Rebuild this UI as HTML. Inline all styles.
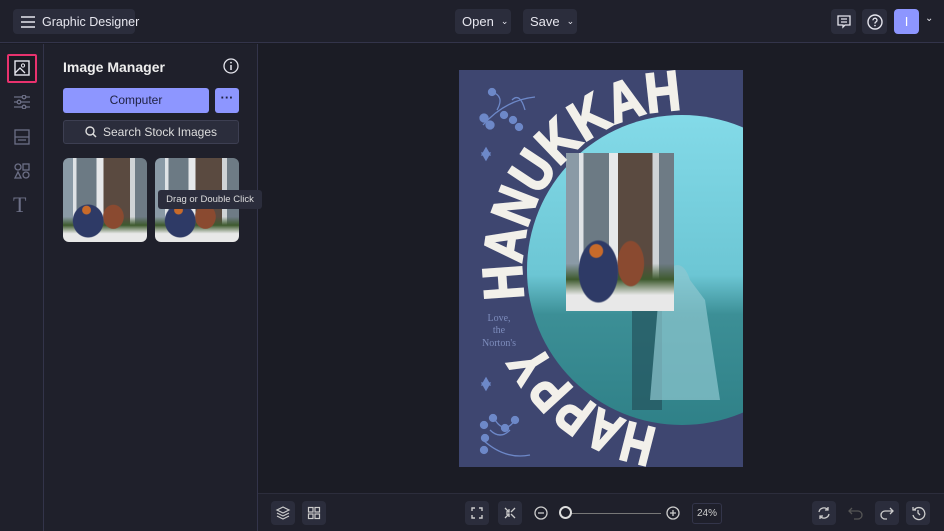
<!DOCTYPE html>
<html><head><style>
*{box-sizing:border-box;margin:0;padding:0}
body{width:944px;height:531px;background:#1b1c25;font-family:"Liberation Sans",sans-serif;color:#e6e6ee;position:relative;overflow:hidden}
.top{position:absolute;left:0;top:0;width:944px;height:43px;background:#1f202b;border-bottom:1px solid #33344a}
.btn{position:absolute;background:#2b2d3c;border-radius:4px;font-size:13px;color:#e6e6ee;display:flex;align-items:center;white-space:nowrap}
.btn svg{flex-shrink:0}
.rail{position:absolute;left:0;top:44px;width:44px;height:487px;background:#1f202b;border-right:1px solid #33344a}
.panel{position:absolute;left:44px;top:44px;width:214px;height:487px;background:#1f202b;border-right:1px solid #33344a}
.bottom{position:absolute;left:258px;top:493px;width:686px;height:38px;background:#1f202b;border-top:1px solid #2c2d3c}
.ib{position:absolute;width:24px;height:24px;background:#2b2d3c;border-radius:4px}
.photo{position:absolute;border-radius:6px;overflow:hidden;background:
radial-gradient(circle at 28% 62%,#c86a2a 0 5%,transparent 6%),
radial-gradient(ellipse at 30% 75%,#2e3a66 0 18%,transparent 19%),
radial-gradient(ellipse at 60% 70%,#8a4a30 0 14%,transparent 15%),
linear-gradient(180deg,transparent 70%,#3e5a2e 80%,#e8e8e8 90%),
linear-gradient(90deg,#8a9aa6 0 12%,#dfe3e6 12% 16%,#6c7a84 16% 40%,#e6e8ea 40% 48%,#5a4a40 48% 80%,#cfd3d6 80% 86%,#6e7b85 86%)}
</style></head><body>
<div class="top">
  <div class="btn" style="left:13px;top:9px;width:122px;height:25px;padding-left:8px">
    <svg width="14" height="12"><path d="M0 1H14M0 6H14M0 11H14" stroke="#e6e6ee" stroke-width="1.5"/></svg>
    <span style="margin-left:7px;font-size:12.5px">Graphic Designer</span></div>
  <div class="btn" style="left:455px;top:9px;width:56px;height:25px;padding-left:7px">Open <span style="font-size:9px;margin-left:7px">&#8964;</span></div>
  <div class="btn" style="left:523px;top:9px;width:54px;height:25px;padding-left:7px">Save <span style="font-size:9px;margin-left:7px">&#8964;</span></div>
  <div class="btn" style="left:831px;top:9px;width:25px;height:25px;justify-content:center"><svg width="14" height="14"><path d="M1 1H13V10H8L6 12V10H1Z M4 4H10M4 7H10" fill="none" stroke="#e6e6ee" stroke-width="1.3"/></svg></div>
  <div class="btn" style="left:862px;top:9px;width:25px;height:25px;justify-content:center"><svg width="16" height="16"><circle cx="8" cy="8" r="7" fill="none" stroke="#e6e6ee" stroke-width="1.4"/><path d="M6 6.3a2 2 0 1 1 2.6 1.8c-.6.3-.6.7-.6 1.5" fill="none" stroke="#e6e6ee" stroke-width="1.3"/><circle cx="8" cy="11.6" r=".8" fill="#e6e6ee"/></svg></div>
  <div class="btn" style="left:894px;top:9px;width:25px;height:25px;background:#8d96ff;justify-content:center;color:#fff">I</div>
  <div style="position:absolute;left:925px;top:13px;font-size:10px">&#8964;</div>
</div>
<div class="rail">
  <div style="position:absolute;left:7px;top:10px;width:30px;height:29px;border:2px solid #e8326e;border-radius:2px;background:#1a1b23"></div>
  <svg style="position:absolute;left:14px;top:16px" width="16" height="16"><rect x="1" y="1" width="14" height="14" fill="none" stroke="#e6e6ee" stroke-width="1.4"/><circle cx="9" cy="5.5" r="1.6" fill="none" stroke="#e6e6ee"/><path d="M1 13L6 8L11 13" fill="none" stroke="#e6e6ee" stroke-width="1.3"/></svg>
  <svg style="position:absolute;left:14px;top:51px" width="16" height="14" stroke="#6c6f86" stroke-width="1.3" fill="none"><path d="M0 2H16M0 7H16M0 12H16"/><circle cx="10" cy="2" r="1.8" fill="#1f202b"/><circle cx="5" cy="7" r="1.8" fill="#1f202b"/><circle cx="10" cy="12" r="1.8" fill="#1f202b"/></svg>
  <svg style="position:absolute;left:14px;top:85px" width="16" height="16" stroke="#6c6f86" stroke-width="1.3" fill="none"><rect x="1" y="1" width="14" height="14"/><path d="M1 8H15M4 11H12"/></svg>
  <svg style="position:absolute;left:14px;top:119px" width="16" height="16" stroke="#6c6f86" stroke-width="1.3" fill="none"><circle cx="4" cy="4" r="3"/><rect x="9" y="1" width="6" height="6"/><path d="M4 9L7 15H1Z"/><circle cx="12" cy="12" r="3"/></svg>
  <div style="position:absolute;left:13px;top:148px;font-family:'Liberation Serif',serif;font-size:22px;color:#6c6f86">T</div>
</div>
<div class="panel">
  <div style="position:absolute;left:19px;top:15px;font-size:14px;font-weight:bold;color:#eee">Image Manager</div>
  <svg style="position:absolute;left:179px;top:14px" width="16" height="16"><circle cx="8" cy="8" r="7" fill="none" stroke="#e6e6ee" stroke-width="1.3"/><path d="M8 7V12" stroke="#e6e6ee" stroke-width="1.5"/><circle cx="8" cy="4.6" r=".9" fill="#e6e6ee"/></svg>
  <div style="position:absolute;left:19px;top:44px;width:146px;height:25px;background:#8d96ff;border-radius:3px;color:#1e2040;font-size:12px;text-align:center;line-height:25px">Computer</div>
  <div style="position:absolute;left:171px;top:44px;width:24px;height:25px;background:#8d96ff;border-radius:3px;color:#1e2040;font-size:13px;font-weight:bold;text-align:center;line-height:20px">···</div>
  <div style="position:absolute;left:19px;top:76px;width:176px;height:24px;background:#2b2d3c;border:1px solid #3d3f52;border-radius:3px;font-size:12px;text-align:center;line-height:22px;color:#ddd"><svg width="12" height="12" style="vertical-align:-2px;margin-right:6px"><circle cx="5" cy="5" r="4" fill="none" stroke="#ddd" stroke-width="1.4"/><path d="M8 8L11 11" stroke="#ddd" stroke-width="1.5"/></svg>Search Stock Images</div>
  <div class="photo" style="left:19px;top:114px;width:84px;height:84px"></div>
  <div class="photo" style="left:111px;top:114px;width:84px;height:84px"></div>
  <div style="position:absolute;left:114px;top:146px;width:104px;height:19px;background:#2b2d3c;border-radius:3px;font-size:9.5px;line-height:19px;text-align:center;color:#ddd">Drag or Double Click</div>
</div>
<svg style="position:absolute;left:459px;top:70px" width="284" height="397" viewBox="459 70 284 397">
  <defs>
    <clipPath id="c"><circle cx="682" cy="270" r="155"/></clipPath>
    <linearGradient id="g" x1="0" y1="0" x2="0" y2="1"><stop offset="0" stop-color="#84dbe9"/><stop offset=".5" stop-color="#6cc6d4"/><stop offset=".62" stop-color="#3c8f96"/><stop offset="1" stop-color="#2e7f86"/></linearGradient>
  </defs>
  <rect x="459" y="70" width="284" height="397" fill="#3e4670"/>
  <g clip-path="url(#c)">
    <rect x="520" y="110" width="230" height="330" fill="url(#g)"/>
    <rect x="632" y="300" width="30" height="110" fill="#23525c" opacity=".7"/>
    <path d="M660 280Q680 250 690 280L705 300 720 400 650 400Z" fill="#8fc7d0" opacity=".7"/>
  </g>
  <foreignObject x="566" y="153" width="108" height="158"><div class="photo" style="position:static;width:108px;height:158px;border-radius:0"></div></foreignObject>
  <path id="arc" d="M762 408.6A160 160 0 1 1 762 131.4" fill="none"/>
  <text font-family="Liberation Sans,sans-serif" font-weight="bold" font-size="56" fill="#f2f0ea" stroke="#f2f0ea" stroke-width="2"><textPath href="#arc" startOffset="108" textLength="152" lengthAdjust="spacingAndGlyphs">HAPPY</textPath></text>
  <text font-family="Liberation Sans,sans-serif" font-weight="bold" font-size="56" fill="#f2f0ea" stroke="#f2f0ea" stroke-width="2"><textPath href="#arc" startOffset="306" textLength="280" lengthAdjust="spacingAndGlyphs">HANUKKAH</textPath></text>
  <g fill="#6d88c8" stroke="#6d88c8" stroke-width="1.3">
    <path d="M483 125Q505 100 535 97M497 110Q505 96 492 92M512 100Q520 92 525 110" fill="none"/>
    <circle cx="484" cy="118" r="4"/><circle cx="490" cy="125" r="4"/><circle cx="492" cy="92" r="3.5"/><circle cx="504" cy="115" r="3.5"/><circle cx="513" cy="120" r="3.5"/><circle cx="519" cy="127" r="3.5"/>
    <path d="M486 148L490 155H482Z M486 160L482 153H490Z"/>
    <path d="M486 378L490 385H482Z M486 390L482 383H490Z"/>
    <path d="M483 440Q505 460 530 455M490 430Q500 440 510 430M495 420Q505 435 515 420" fill="none"/>
    <circle cx="484" cy="425" r="3.5"/><circle cx="485" cy="438" r="3.5"/><circle cx="484" cy="450" r="3.5"/><circle cx="493" cy="418" r="3.5"/><circle cx="505" cy="428" r="3.5"/><circle cx="515" cy="420" r="3.5"/>
  </g>
  <g font-family="Liberation Serif,serif" font-size="10" fill="#7d8cbc" text-anchor="middle"><text x="499" y="321">Love,</text><text x="499" y="333">the</text><text x="499" y="346">Norton's</text></g>
</svg>
<div class="bottom">
  <div class="ib" style="left:13px;top:7px"><svg width="24" height="24" fill="none" stroke="#ccc" stroke-width="1.2"><path d="M12 6L18 9L12 12L6 9Z M6 12L12 15L18 12M6 15L12 18L18 15"/></svg></div>
  <div class="ib" style="left:44px;top:7px"><svg width="24" height="24" fill="none" stroke="#ccc" stroke-width="1.2"><rect x="6.5" y="6.5" width="4.5" height="4.5"/><rect x="13" y="6.5" width="4.5" height="4.5"/><rect x="6.5" y="13" width="4.5" height="4.5"/><rect x="13" y="13" width="4.5" height="4.5"/></svg></div>
  <div class="ib" style="left:207px;top:7px"><svg width="24" height="24" fill="none" stroke="#ccc" stroke-width="1.4"><path d="M7 10V7H10M14 7H17V10M17 14V17H14M10 17H7V14"/></svg></div>
  <div class="ib" style="left:240px;top:7px"><svg width="24" height="24" fill="none" stroke="#ccc" stroke-width="1.3"><path d="M7 7L11 11M11 8V11H8M17 7L13 11M7 17L11 13M8 13H11V16M17 17L13 13"/></svg></div>
  <svg style="position:absolute;left:276px;top:12px" width="14" height="14" fill="none" stroke="#ccc" stroke-width="1.3"><circle cx="7" cy="7" r="6"/><path d="M4 7H10"/></svg>
  <div style="position:absolute;left:307px;top:19px;width:96px;height:1px;background:#777"></div>
  <div style="position:absolute;left:301px;top:12px;width:13px;height:13px;border:2px solid #ddd;border-radius:50%;background:#1f202b"></div>
  <svg style="position:absolute;left:408px;top:12px" width="14" height="14" fill="none" stroke="#ccc" stroke-width="1.3"><circle cx="7" cy="7" r="6"/><path d="M4 7H10M7 4V10"/></svg>
  <div style="position:absolute;left:434px;top:9px;width:30px;height:21px;border:1px solid #33354a;border-radius:3px;font-size:10px;line-height:19px;text-align:center;color:#ccc">24%</div>
  <div class="ib" style="left:554px;top:7px"><svg width="24" height="24" fill="none" stroke="#ccc" stroke-width="1.3"><path d="M7 11A5 5 0 0 1 16 9M17 13A5 5 0 0 1 8 15M16 6V9H13M8 18V15H11"/></svg></div>
  <svg style="position:absolute;left:590px;top:12px" width="16" height="14" fill="none" stroke="#555" stroke-width="1.3"><path d="M4 2L1 5L4 8M1 5H10A4 4 0 0 1 10 13H6"/></svg>
  <div class="ib" style="left:617px;top:7px"><svg width="24" height="24" fill="none" stroke="#ccc" stroke-width="1.3"><path d="M15 7L18 10L15 13M18 10H10A4 4 0 0 0 10 18H12"/></svg></div>
  <div class="ib" style="left:648px;top:7px"><svg width="24" height="24" fill="none" stroke="#ccc" stroke-width="1.3"><path d="M8 9A6 6 0 1 1 7 14M7 6V9H10M12 9V12L14 14"/></svg></div>
</div>
</body></html>
